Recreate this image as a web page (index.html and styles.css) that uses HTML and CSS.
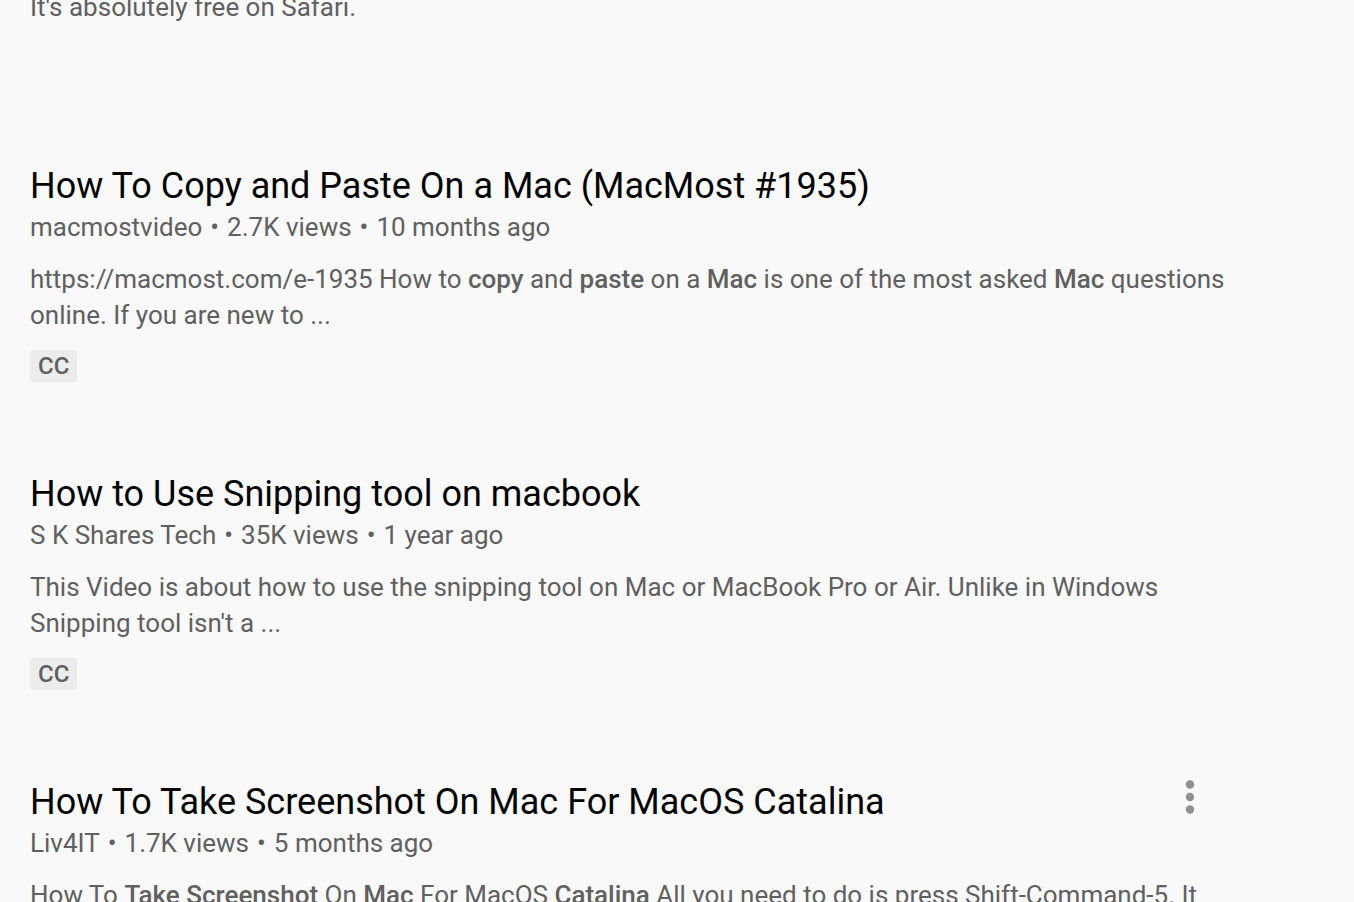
FILE: index.html
```html
<!DOCTYPE html>
<html lang="en">
<head>
<meta charset="utf-8">
<title>Search results</title>
<link rel="stylesheet" href="styles.css">
</head>
<body>
<main class="results">
  <section class="video">
    <div class="info">
      <h3 class="title">Take a Screenshot on Mac with Awesome Screenshot</h3>
      <div class="meta"><span>Awesome Screenshot</span><span class="dot">•</span><span>12K views</span><span class="dot">•</span><span>2 years ago</span></div>
      <p class="desc">Capture, annotate and share screenshots of any web page in seconds with this extension.<br>It's absolutely free on Safari.</p>
    </div>
  </section>

  <section class="video">
    <div class="info">
      <h3 class="title">How To Copy and Paste On a Mac (MacMost #1935)</h3>
      <div class="meta"><span>macmostvideo</span><span class="dot">•</span><span>2.7K views</span><span class="dot">•</span><span>10 months ago</span></div>
      <p class="desc">https://macmost.com/e-1935 How to <b>copy</b> and <b>paste</b> on a <b>Mac</b> is one of the most asked <b>Mac</b> questions online. If you are new to ...</p>
      <div class="badges"><span class="badge">CC</span></div>
    </div>
  </section>

  <section class="video">
    <div class="info">
      <h3 class="title">How to Use Snipping tool on macbook</h3>
      <div class="meta"><span>S K Shares Tech</span><span class="dot">•</span><span>35K views</span><span class="dot">•</span><span>1 year ago</span></div>
      <p class="desc">This Video is about how to use the snipping tool on Mac or MacBook Pro or Air. Unlike in Windows Snipping tool isn't a ...</p>
      <div class="badges"><span class="badge">CC</span></div>
    </div>
  </section>

  <section class="video">
    <div class="info">
      <h3 class="title">How To Take Screenshot On Mac For MacOS Catalina</h3>
      <div class="meta"><span>Liv4IT</span><span class="dot">•</span><span>1.7K views</span><span class="dot">•</span><span>5 months ago</span></div>
      <p class="desc">How To <b>Take Screenshot</b> On <b>Mac</b> For MacOS <b>Catalina</b> All you need to do is press Shift-Command-5. It opens a panel with all the options ...</p>
      <div class="badges"><span class="badge">CC</span></div>
    </div>
    <button class="menu" aria-label="Action menu">
      <svg viewBox="0 0 48 48" width="48" height="48"><circle cx="24" cy="11.5" r="4.2"/><circle cx="24" cy="24" r="4.2"/><circle cx="24" cy="36.5" r="4.2"/></svg>
    </button>
  </section>
</main>
</body>
</html>
```

FILE: styles.css
```css
html, body {
  margin: 0;
  padding: 0;
  background: #f9f9f9;
  overflow: hidden;
}

body {
  font-family: Roboto, "Liberation Sans", Arial, sans-serif;
  width: 1354px;
  height: 902px;
}

.results {
  display: flex;
  flex-direction: column;
  gap: 32px;
  padding: 0 30px;
  margin-top: -148px;
}

.video {
  display: flex;
  align-items: flex-start;
  min-height: 276px;
}

.info {
  flex: 0 0 1210px;
  width: 1210px;
}

.title {
  margin: 0;
  font-size: 36px;
  line-height: 52px;
  font-weight: 400;
  color: #030303;
  white-space: nowrap;
}

.meta {
  display: flex;
  font-size: 26px;
  line-height: 36px;
  color: #606060;
  margin-top: -3px;
}

.dot {
  margin: 0 8px;
}

.desc {
  margin: 16px 0 0;
  font-size: 26px;
  line-height: 36px;
  color: #606060;
  max-width: 1210px;
}

.desc b {
  font-weight: 500;
}

.badges {
  display: flex;
  margin-top: 17px;
}

.badge {
  font-size: 24px;
  line-height: 28px;
  font-weight: 500;
  padding: 2px 8px;
  border-radius: 4px;
  background: rgba(0, 0, 0, 0.05);
  color: #606060;
}

.menu {
  flex: 0 0 48px;
  width: 48px;
  height: 48px;
  margin: -3px 0 0 -74px;
  padding: 0;
  border: 0;
  background: none;
  fill: #909090;
}

.menu svg {
  display: block;
}
```
